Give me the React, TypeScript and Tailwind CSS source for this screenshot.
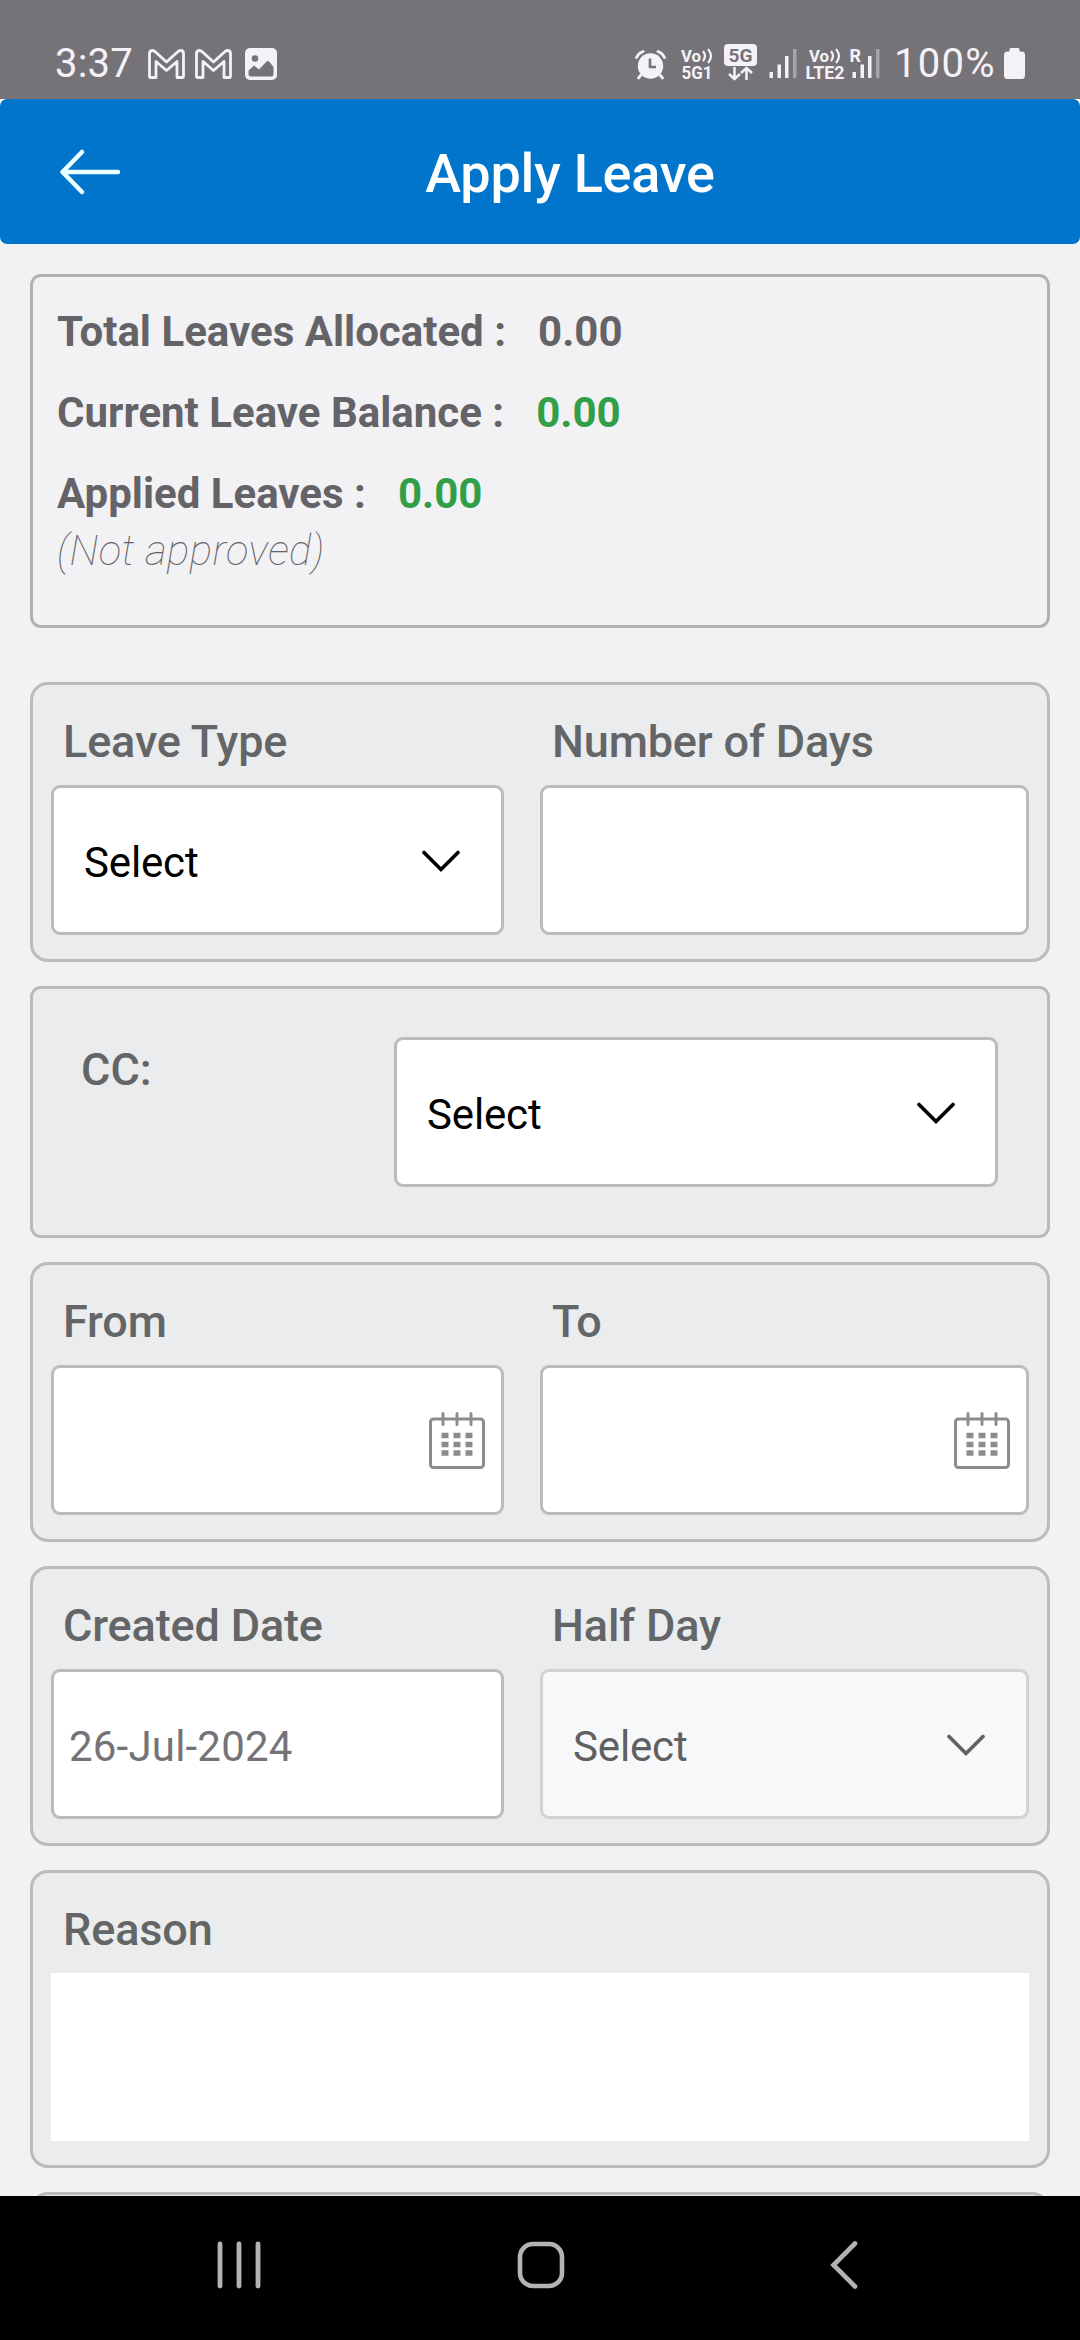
import { useState } from "react";
import type { ReactNode } from "react";

type SelectBoxProps = {
  value: string;
  disabled?: boolean;
  className?: string;
};

function ChevronDown() {
  return (
    <svg width="38" height="23" viewBox="0 0 38 23" fill="none" className="mt-[2px]">
      <path
        d="M2 2.500L19 19.500L36 2.500"
        stroke="currentColor"
        strokeWidth="3.600"
        strokeLinecap="round"
      />
    </svg>
  );
}

function CalendarIcon() {
  return (
    <svg
      width="56"
      height="57"
      viewBox="0 0 56 57"
      fill="none"
      stroke="#8d8b8f"
      strokeWidth="3"
    >
      <rect x="1.500" y="7" width="53" height="48.500" rx="3" />
      <path d="M14 1.500v11M28 1.500v11M42 1.500v11" strokeLinecap="round" />
      <path
        d="M12.500 23.500h31M12.500 32.500h31M12.500 41h31"
        strokeWidth="5.500"
        strokeDasharray="7 5"
      />
    </svg>
  );
}

function MailIcon() {
  return (
    <svg width="37" height="30" viewBox="0 0 37 30" fill="none">
      <path
        d="M1.500 27.500V4.500Q1.500 1.500 4.500 1.500Q6 1.500 7.500 3L18.500 13L29.500 3Q31 1.500 32.500 1.500Q35.500 1.500 35.500 4.500V27.500Q35.500 28.500 34.500 28.500H29V12.500L18.500 21.500L8 12.500V28.500H2.500Q1.500 28.500 1.500 27.500Z"
        stroke="#f5f2f7"
        strokeWidth="2.800"
        strokeLinejoin="round"
      />
    </svg>
  );
}

function PictureIcon() {
  return (
    <svg width="32" height="32" viewBox="0 0 32 32">
      <rect width="32" height="32" rx="5" fill="#f5f2f7" />
      <circle cx="10" cy="10.500" r="3.300" fill="#757377" />
      <path
        d="M3.500 22.500L9 17.500L14 21.500L21.500 13.500Q23 12.500 24.500 14L28.500 19V26Q28.500 28.500 26 28.500H6Q3.500 28.500 3.500 26Z"
        fill="#757377"
      />
    </svg>
  );
}

function AlarmIcon() {
  return (
    <svg width="31" height="30" viewBox="0 0 31 30" fill="none">
      <circle cx="15.500" cy="16" r="12.700" fill="#f5f2f7" />
      <path
        d="M1.500 7.500Q3.500 3 8 1.500M29.500 7.500Q27.500 3 23 1.500M6 25L3.500 28M25 25L27.500 28"
        stroke="#f5f2f7"
        strokeWidth="2.800"
        strokeLinecap="round"
      />
      <path d="M15 8.500V17H21" stroke="#757377" strokeWidth="2.600" />
    </svg>
  );
}

function VolteIcon({ network, width }: { network: string; width: number }) {
  const start = (width - 32) / 2;
  return (
    <svg
      width={width}
      height="38"
      viewBox={`0 0 ${width} 38`}
      fill="#f5f2f7"
      className="overflow-visible font-bold"
    >
      <text x={start} y="18" fontSize="17" textLength="20" lengthAdjust="spacingAndGlyphs">
        Vo
      </text>
      <path
        d={`M${start + 22} 7Q${start + 26} 12 ${start + 22} 17M${start + 27} 5Q${start + 33} 12 ${start + 27} 19`}
        fill="none"
        stroke="#f5f2f7"
        strokeWidth="2.200"
      />
      <text
        x="0.500"
        y="35"
        fontSize="18"
        textLength={width - 1}
        lengthAdjust="spacingAndGlyphs"
      >
        {network}
      </text>
    </svg>
  );
}

function DataIcon() {
  return (
    <svg width="33" height="37" viewBox="0 0 33 37" className="overflow-visible">
      <rect width="33" height="22" rx="4" fill="#f5f2f7" />
      <text
        x="4.500"
        y="18"
        fontSize="19"
        fill="#757377"
        textLength="24"
        lengthAdjust="spacingAndGlyphs"
        className="font-bold"
      >
        5G
      </text>
      <path
        d="M10.500 23V35M5 30L10.500 35L16 30M22.500 36V24M17 29L22.500 24L28 29"
        fill="none"
        stroke="#f5f2f7"
        strokeWidth="2.500"
      />
    </svg>
  );
}

function SignalIcon({ roaming = false }: { roaming?: boolean }) {
  return (
    <svg
      width="29"
      height="31"
      viewBox="0 0 29 31"
      fill="#f5f2f7"
      className="overflow-visible"
    >
      <rect x="1.500" y="23" width="3.500" height="6" />
      <rect x="9.500" y="15.500" width="3.500" height="13.500" />
      <rect x="17" y="7" width="3.500" height="22" />
      <rect x="25" y="0" width="3.500" height="29" fill="#a5a3a7" />
      {roaming && (
        <text x="-1.500" y="13" fontSize="18" className="font-bold">
          R
        </text>
      )}
    </svg>
  );
}

function BatteryIcon() {
  return (
    <svg width="21" height="31" viewBox="0 0 21 31" fill="#f5f2f7">
      <rect x="5.500" y="0" width="10" height="8" rx="1.500" />
      <rect x="0" y="3.500" width="21" height="27.500" rx="3.500" />
    </svg>
  );
}

function StatusBar() {
  return (
    <div className="flex h-[99px] items-start bg-[#757377] text-[#f5f2f7]">
      <div className="flex items-center pt-[40px] pl-[55px]">
        <span className="w-[93px] text-[40px] leading-[48px] tracking-[0.2px]">
          3:37
        </span>
        <div className="flex items-center gap-[10px]">
          <MailIcon />
          <MailIcon />
        </div>
        <div className="pl-[13px]">
          <PictureIcon />
        </div>
      </div>
      <div className="ml-auto flex items-start pr-[55px]">
        <div className="pt-[50px]">
          <AlarmIcon />
        </div>
        <div className="pt-[44px] pl-[15px]">
          <VolteIcon network="5G1" width={32} />
        </div>
        <div className="pt-[44px] pl-[11px]">
          <DataIcon />
        </div>
        <div className="pt-[49px] pl-[11px]">
          <SignalIcon />
        </div>
        <div className="pt-[44px] pl-[8px]">
          <VolteIcon network="LTE2" width={40} />
        </div>
        <div className="pt-[49px] pl-[6px]">
          <SignalIcon roaming />
        </div>
        <span className="w-[124px] pt-[40px] pl-[14px] text-[40px] leading-[48px] tracking-[1.3px]">
          100%
        </span>
        <div className="pt-[48px]">
          <BatteryIcon />
        </div>
      </div>
    </div>
  );
}

function Header() {
  return (
    <div className="bg-white">
      <header className="flex h-[145px] items-center rounded-[7px] bg-[#0075cb] text-white">
        <button className="w-[140px] pl-[59px]">
          <svg width="62" height="46" viewBox="0 0 62 46" fill="none">
            <path
              d="M23 3L3.500 23L23 43M3.500 23H59"
              stroke="#eaffff"
              strokeWidth="4.500"
              strokeLinecap="round"
              strokeLinejoin="round"
            />
          </svg>
        </button>
        <h1 className="mr-[80px] flex-1 pt-[5px] text-center text-[54px] leading-[64px] font-medium tracking-[-0.2px]">
          Apply Leave
        </h1>
      </header>
    </div>
  );
}

function Card({ children }: { children?: ReactNode }) {
  return (
    <section className="mb-6 h-[280px] rounded-[18px] border-[3px] border-[#b9bbbd] bg-[#eaeced] px-[18px] pt-[33px]">
      {children}
    </section>
  );
}

function Field({ label, children }: { label: string; children: ReactNode }) {
  return (
    <div>
      <label className="mb-[19px] block pl-3 text-[45px] leading-[48px] font-medium tracking-[-0.15px] text-[#646567]">
        {label}
      </label>
      {children}
    </div>
  );
}

function SelectBox({ value, disabled, className = "" }: SelectBoxProps) {
  return (
    <button
      disabled={disabled}
      className={`flex h-[150px] items-center justify-between rounded-[9px] border-[3px] pl-[30px] text-[42px] tracking-[-0.15px] ${
        disabled
          ? "border-[#d0d2d4] bg-[#f7f8fa] text-[#5f6062]"
          : "border-[#b9bbbd] bg-white text-black"
      } ${className}`}
    >
      <span className="pt-1">{value}</span>
      <ChevronDown />
    </button>
  );
}

function DateBox() {
  return (
    <div className="flex h-[150px] items-center justify-end rounded-[9px] border-[3px] border-[#b9bbbd] bg-white pr-[16px]">
      <CalendarIcon />
    </div>
  );
}

function NavBar() {
  return (
    <nav className="flex h-[144px] items-start bg-black pt-[45px] pl-[216px]">
      <svg width="46" height="48" viewBox="0 0 46 48">
        <path
          d="M4 3V45M23 3V45M42 3V45"
          stroke="#b5b2b6"
          strokeWidth="4.800"
          strokeLinecap="round"
        />
      </svg>
      <svg width="48" height="48" viewBox="0 0 48 48" fill="none" className="ml-[255px]">
        <rect
          x="3"
          y="3"
          width="42"
          height="42"
          rx="13"
          stroke="#b5b2b6"
          strokeWidth="4.600"
        />
      </svg>
      <svg width="28" height="48" viewBox="0 0 28 48" fill="none" className="ml-[265px]">
        <path
          d="M25 2.500L3.500 24L25 45.500"
          stroke="#b5b2b6"
          strokeWidth="4.600"
          strokeLinecap="round"
        />
      </svg>
    </nav>
  );
}

export default function App() {
  const [reason, setReason] = useState("");

  const balances = [
    { label: "Total Leaves Allocated :", value: "0.00", color: "text-[#646367]" },
    { label: "Current Leave Balance :", value: "0.00", color: "text-[#319e48]" },
    { label: "Applied Leaves :", value: "0.00", color: "text-[#319e48]" },
  ];

  return (
    <div className="flex h-[2340px] w-[1080px] flex-col overflow-hidden bg-[#f2f1f4] font-['Roboto',sans-serif]">
      <StatusBar />
      <Header />

      <main className="min-h-0 flex-1 overflow-hidden px-[30px] pt-[30px]">
        <section className="mb-[54px] h-[354px] rounded-[11px] border-[3px] border-[#b1b1b4] px-[24px] pt-[30px] text-[#646367]">
          {balances.map((item) => (
            <div
              key={item.label}
              className="mb-[31px] flex gap-[32px] text-[42px] leading-[50px] font-bold"
            >
              <span>{item.label}</span>
              <span className={item.color}>{item.value}</span>
            </div>
          ))}
          <p className="-mt-[24px] text-[42px] leading-[50px] font-thin tracking-[0.4px] italic">
            (Not approved)
          </p>
        </section>

        <Card>
          <div className="grid grid-cols-[453px_489px] gap-[36px]">
            <Field label="Leave Type">
              <SelectBox value="Select" className="w-full pr-[41px]" />
            </Field>
            <Field label="Number of Days">
              <div className="h-[150px] rounded-[9px] border-[3px] border-[#b9bbbd] bg-white" />
            </Field>
          </div>
        </Card>

        <section className="mb-6 flex h-[252px] items-start justify-between rounded-[11px] border-[3px] border-[#b9bbbd] bg-[#eaeced] pt-[48px] pr-[49px] pl-[48px]">
          <span className="pt-[9px] text-[45px] leading-[48px] font-medium text-[#646567]">
            CC:
          </span>
          <SelectBox value="Select" className="w-[604px] pr-[40px]" />
        </section>

        <Card>
          <div className="grid grid-cols-[453px_489px] gap-[36px]">
            <Field label="From">
              <DateBox />
            </Field>
            <Field label="To">
              <DateBox />
            </Field>
          </div>
        </Card>

        <Card>
          <div className="grid grid-cols-[453px_489px] gap-[36px]">
            <Field label="Created Date">
              <div className="flex h-[150px] items-center rounded-[9px] border-[3px] border-[#b9bbbd] bg-white pt-1 pl-[15px] text-[42px] tracking-[0.2px] text-[#757377]">
                26-Jul-2024
              </div>
            </Field>
            <Field label="Half Day">
              <SelectBox value="Select" disabled className="w-full pr-[41px]" />
            </Field>
          </div>
        </Card>

        <section className="mb-6 h-[298px] rounded-[18px] border-[3px] border-[#b9bbbd] bg-[#eaeced] px-[18px] pt-[33px]">
          <Field label="Reason">
            <textarea
              value={reason}
              onChange={(e) => setReason(e.target.value)}
              className="block h-[168px] w-full resize-none bg-white"
            />
          </Field>
        </section>

        <Card />
      </main>

      <NavBar />
    </div>
  );
}
